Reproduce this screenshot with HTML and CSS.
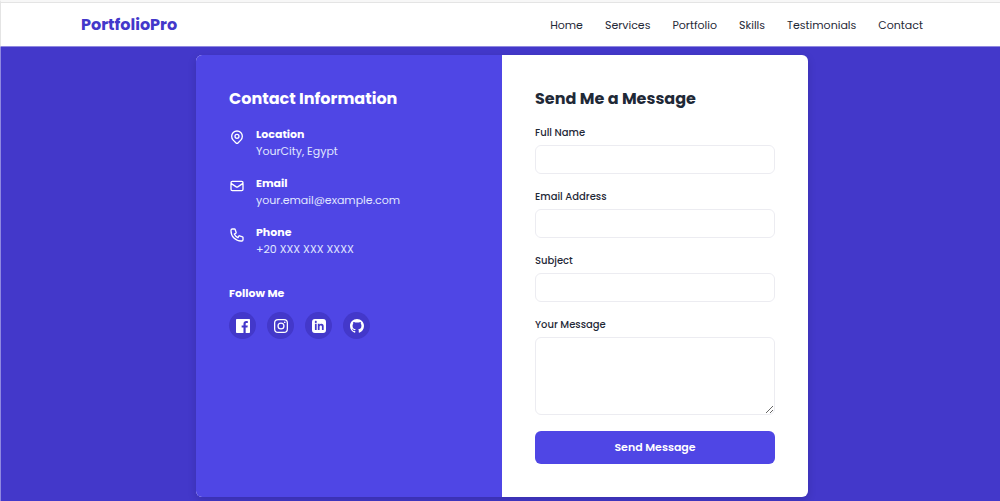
FILE: index.html
```html
<!DOCTYPE html>
<html lang="en">
<head>
<meta charset="utf-8">
<meta name="viewport" content="width=device-width, initial-scale=1">
<title>PortfolioPro</title>
<link rel="stylesheet" href="styles.css">
</head>
<body class="page">
<header class="header">
  <div class="header-inner">
    <a class="brand" href="#">PortfolioPro</a>
    <nav class="nav">
      <a href="#home">Home</a>
      <a href="#services">Services</a>
      <a href="#portfolio">Portfolio</a>
      <a href="#skills">Skills</a>
      <a href="#testimonials">Testimonials</a>
      <a href="#contact">Contact</a>
    </nav>
  </div>
</header>
<main class="main" id="contact">
  <div class="card">
    <section class="info">
      <h2 class="title">Contact Information</h2>
      <ul class="details">
        <li class="detail">
          <svg class="detail-icon" viewBox="0 0 24 24"><path d="M17.657 16.657L13.414 20.9a2 2 0 0 1-2.828 0l-4.243-4.243a8 8 0 1 1 11.314 0z"/><circle cx="12" cy="11" r="3"/></svg>
          <div><h3 class="label">Location</h3><p class="value">YourCity, Egypt</p></div>
        </li>
        <li class="detail">
          <svg class="detail-icon" viewBox="0 0 24 24"><path d="M3 8l7.89 5.26a2 2 0 0 0 2.22 0L21 8M5 19h14a2 2 0 0 0 2-2V7a2 2 0 0 0-2-2H5a2 2 0 0 0-2 2v10a2 2 0 0 0 2 2z"/></svg>
          <div><h3 class="label">Email</h3><p class="value">your.email@example.com</p></div>
        </li>
        <li class="detail">
          <svg class="detail-icon" viewBox="0 0 24 24"><path d="M3 5a2 2 0 0 1 2-2h3.28a1 1 0 0 1 .948.684l1.498 4.493a1 1 0 0 1-.502 1.21l-2.257 1.13a11.042 11.042 0 0 0 5.516 5.516l1.13-2.257a1 1 0 0 1 1.21-.502l4.493 1.498a1 1 0 0 1 .684.949V19a2 2 0 0 1-2 2h-1C9.716 21 3 14.284 3 6V5z"/></svg>
          <div><h3 class="label">Phone</h3><p class="value">+20 XXX XXX XXXX</p></div>
        </li>
      </ul>
      <h3 class="label follow">Follow Me</h3>
      <div class="socials">
        <a class="social" href="#facebook" aria-label="Facebook"><svg viewBox="0 0 24 24"><path d="M22.675 0H1.325C.593 0 0 .593 0 1.325v21.351C0 23.407.593 24 1.325 24h11.495v-9.294H9.692v-3.622h3.128V8.413c0-3.1 1.893-4.788 4.659-4.788 1.325 0 2.463.099 2.795.143v3.24h-1.918c-1.504 0-1.795.715-1.795 1.763v2.313h3.587l-.467 3.622h-3.12V24h6.114c.73 0 1.325-.593 1.325-1.324V1.325C24 .593 23.407 0 22.675 0z"/></svg></a>
        <a class="social" href="#instagram" aria-label="Instagram"><svg viewBox="0 0 24 24"><path fill-rule="evenodd" d="M7 0h10a7 7 0 0 1 7 7v10a7 7 0 0 1-7 7H7a7 7 0 0 1-7-7V7a7 7 0 0 1 7-7zm0 2.2A4.8 4.8 0 0 0 2.200 7v10A4.800 4.800 0 0 0 7 21.800h10a4.800 4.800 0 0 0 4.800-4.800V7A4.800 4.800 0 0 0 17 2.200zM12 5.840a6.160 6.160 0 1 1 0 12.320 6.160 6.160 0 0 1 0-12.320zM12 8a4 4 0 1 0 0 8 4 4 0 0 0 0-8z"/><circle cx="18.400" cy="5.600" r="1.440"/></svg></a>
        <a class="social" href="#linkedin" aria-label="LinkedIn"><svg viewBox="0 0 24 24"><path d="M19 0H5a5 5 0 0 0-5 5v14a5 5 0 0 0 5 5h14a5 5 0 0 0 5-5V5a5 5 0 0 0-5-5zM8 19H5V8h3v11zM6.500 6.732c-.966 0-1.750-.790-1.750-1.764s.784-1.764 1.750-1.764 1.750.790 1.750 1.764-.783 1.764-1.750 1.764zM20 19h-3v-5.604c0-3.368-4-3.113-4 0V19h-3V8h3v1.765c1.396-2.586 7-2.777 7 2.476V19z"/></svg></a>
        <a class="social" href="#github" aria-label="GitHub"><svg viewBox="0 0 24 24"><path d="M12 0C5.374 0 0 5.373 0 12c0 5.302 3.438 9.800 8.207 11.387.599.111.793-.261.793-.577v-2.234c-3.338.726-4.033-1.416-4.033-1.416-.546-1.387-1.333-1.756-1.333-1.756-1.089-.745.083-.729.083-.729 1.205.084 1.839 1.237 1.839 1.237 1.070 1.834 2.807 1.304 3.492.997.107-.775.418-1.305.762-1.604-2.665-.305-5.467-1.334-5.467-5.931 0-1.311.469-2.381 1.236-3.221-.124-.303-.535-1.524.117-3.176 0 0 1.008-.322 3.301 1.230A11.509 11.509 0 0 1 12 5.803c1.020.005 2.047.138 3.006.404 2.291-1.552 3.297-1.230 3.297-1.230.653 1.653.242 2.874.118 3.176.770.840 1.235 1.911 1.235 3.221 0 4.609-2.807 5.624-5.479 5.921.430.372.823 1.102.823 2.222v3.293c0 .319.192.694.801.576C20.566 21.797 24 17.300 24 12c0-6.627-5.373-12-12-12z"/></svg></a>
      </div>
    </section>
    <section class="message">
      <h2 class="title">Send Me a Message</h2>
      <form class="form">
        <div class="field"><label for="name">Full Name</label><input id="name" type="text"></div>
        <div class="field"><label for="email">Email Address</label><input id="email" type="email"></div>
        <div class="field"><label for="subject">Subject</label><input id="subject" type="text"></div>
        <div class="field"><label for="body">Your Message</label><textarea id="body" rows="4"></textarea></div>
        <button class="send" type="button">Send Message</button>
      </form>
    </section>
  </div>
</main>
</body>
</html>
```
FILE: styles.css
```css
* { box-sizing: border-box; margin: 0; padding: 0; }
a { color: inherit; text-decoration: none; }

.page {
  min-height: 100vh;
  display: flex;
  flex-direction: column;
  background: #4338ca;
  color: #1f2937;
  font-family: Poppins, Inter, "Open Sans", sans-serif;
  font-size: 11px;
}

.header {
  border-top: 2px solid #f7f7f7;
  border-left: 1px solid #e4e4e4;
  border-bottom: 1px solid #8f88e0;
  background: #fff;
}
.header-inner {
  display: flex;
  align-items: center;
  justify-content: space-between;
  border-top: 1px solid #e4e4e4;
  padding: 10px 77px 10px 80px;
}
.brand {
  color: #4338ca;
  font-size: 16px;
  line-height: 23px;
  font-weight: 700;
}
.nav { display: flex; gap: 22px; line-height: 18px; }

.main {
  flex: 1;
  border-left: 1px solid #8f88e0;
  padding: 8px 16px 4px 19px;
}
.card {
  display: grid;
  grid-template-columns: 1fr 1fr;
  max-width: 612px;
  margin: 0 auto;
  border-radius: 6px;
  overflow: hidden;
  background: #fff;
  box-shadow: 0 3px 8px rgba(0, 0, 0, 0.15);
}
.info { padding: 33px; background: #4f46e5; color: #fff; }
.message { padding: 33px; }
.title {
  margin-bottom: 16px;
  font-size: 16px;
  line-height: 22px;
  font-weight: 700;
}

.details { display: grid; gap: 15px; list-style: none; }
.detail { display: flex; gap: 11px; }
.detail-icon {
  width: 16px;
  height: 16px;
  margin-top: 3px;
  fill: none;
  stroke: #fff;
  stroke-width: 2;
  stroke-linecap: round;
  stroke-linejoin: round;
}
.label { font-size: 11px; line-height: 17px; font-weight: 700; }
.value { color: #e0e7ff; line-height: 17px; }
.follow { margin: 27px 0 10px; }

.socials { display: flex; gap: 11px; }
.social {
  display: grid;
  place-items: center;
  width: 27px;
  height: 27px;
  border-radius: 50%;
  background: #4338ca;
}
.social svg { width: 14px; height: 14px; fill: #fff; }

.form { display: grid; gap: 16px; }
.field { display: grid; gap: 5px; }
.field label { font-size: 10px; line-height: 14px; font-weight: 500; }
.field input,
.field textarea {
  display: block;
  width: 100%;
  height: 29px;
  border: 1px solid #ececf1;
  border-radius: 6px;
  padding: 5px 10px;
  background: #fff;
  color: inherit;
  font: inherit;
}
.field textarea { height: 78px; resize: vertical; }
.send {
  height: 33px;
  border: 0;
  border-radius: 6px;
  background: #4f46e5;
  color: #fff;
  font: inherit;
  font-weight: 600;
}
```
